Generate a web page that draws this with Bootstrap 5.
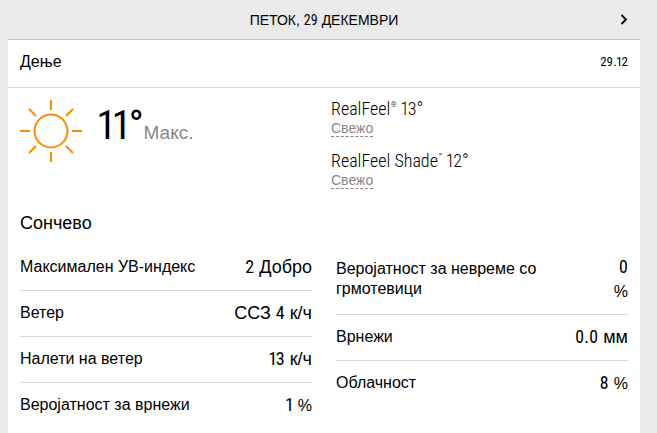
<!DOCTYPE html>
<html lang="mk">
<head>
<meta charset="utf-8">
<meta name="viewport" content="width=device-width, initial-scale=1">
<title>Петок, 29 декември</title>
<link href="https://cdn.jsdelivr.net/npm/bootstrap@5.3.0/dist/css/bootstrap.min.css" rel="stylesheet">
<style>
  body { background: #eaeaea; color: #000; font-family: "Liberation Sans", Arial, sans-serif; font-size: 16px; line-height: 20px; }
  .page { padding: 0 17px 0 8px; }
  .slim { font-family: "Roboto Condensed", "Liberation Sans", Arial, sans-serif; font-variant-numeric: proportional-nums; }
  .day-bar { height: 40px; padding: 0 12px 0 20px; border-bottom: 1px solid #c0c0c0; }
  .day-title { font-size: 14px; line-height: 20px; }
  .next-day { width: 8px; height: 20px; line-height: 0; color: #000; }
  .period { background: #fff; }
  .period-head { height: 48px; padding: 0 12px 4px; border-bottom: 1px solid #d8d8d8; }
  .period-date { font-size: 13px; }
  .period-body { padding: 12px 12px 0; }
  .summary { height: 112px; }
  .sun { width: 62px; height: 62px; margin-right: 16px; }
  .degrees { font-size: 40px; line-height: 52px; }
  .muted { color: #878787; }
  .max-label { font-size: 19px; }
  .feels { padding-left: 7px; }
  .feel { font-size: 18px; line-height: 18px; }
  .feel sup { font-size: 8px; top: -8px; }
  .feel-note { font-size: 14px; line-height: 16px; border-bottom: 1px dashed #878787; }
  .feel-item { height: 52px; }
  .phrase { font-size: 18px; line-height: 22px; }
  .facts { padding-top: 11px; --bs-gutter-x: 24px; }
  .fact { padding: 10px 0 11px; border-bottom: 1px solid #d8d8d8; }
  .fact:last-child { border-bottom: 0; }
  .fact-value { font-size: 18px; line-height: 24px; }
  .percent { font-size: 16px; line-height: 20px; }
</style>
</head>
<body>
<div class="page d-flex flex-column min-vh-100">
  <header class="day-bar d-flex align-items-center">
    <h1 class="day-title fw-normal text-center flex-grow-1 mb-0">ПЕТОК, <span class="slim">29</span> ДЕКЕМВРИ</h1>
    <button type="button" class="next-day btn p-0 border-0" aria-label="Следен ден">
      <svg width="8" height="12" viewBox="0 0 8 12" fill="none" stroke="currentColor" stroke-width="1.800" aria-hidden="true"><path d="M1.500 1 6 5.500 1.500 10"/></svg>
    </button>
  </header>
  <main class="period flex-grow-1">
    <div class="period-head d-flex align-items-center justify-content-between">
      <h2 class="fs-6 fw-normal mb-0">Дење</h2>
      <span class="period-date slim">29.12</span>
    </div>
    <div class="period-body">
      <div class="summary row gx-0">
        <div class="col-6 d-flex align-items-start">
          <svg class="sun" viewBox="0 0 62 62" fill="none" stroke="#ff8a00" stroke-width="2" aria-hidden="true">
            <circle cx="31" cy="31" r="16.500"/>
            <path d="M31 0v10M31 52v10M0 31h10M52 31h10M9 9l7 7M46 46l7 7M9 53l7-7M46 16l7-7"/>
          </svg>
          <div class="d-flex align-items-baseline">
            <span class="degrees slim">11°</span><span class="max-label muted">Макс.</span>
          </div>
        </div>
        <div class="feels col-6">
          <div class="feel-item">
            <div class="feel slim fw-light">RealFeel<sup>®</sup> 13°</div>
            <span class="feel-note muted d-inline-block">Свежо</span>
          </div>
          <div class="feel-item">
            <div class="feel slim fw-light">RealFeel Shade<sup>™</sup> 12°</div>
            <span class="feel-note muted d-inline-block">Свежо</span>
          </div>
        </div>
      </div>
      <p class="phrase mb-0">Сончево</p>
      <div class="facts row">
        <div class="col-6">
          <ul class="list-unstyled mb-0">
            <li class="fact d-flex justify-content-between align-items-center"><span>Максимален УВ-индекс</span><span class="fact-value"><span class="slim">2</span> Добро</span></li>
            <li class="fact d-flex justify-content-between align-items-center"><span>Ветер</span><span class="fact-value">ССЗ <span class="slim">4</span> к/ч</span></li>
            <li class="fact d-flex justify-content-between align-items-center"><span>Налети на ветер</span><span class="fact-value"><span class="slim">13</span> к/ч</span></li>
            <li class="fact d-flex justify-content-between align-items-center"><span>Веројатност за врнежи</span><span class="fact-value"><span class="slim">1</span> <span class="percent">%</span></span></li>
          </ul>
        </div>
        <div class="col-6">
          <ul class="list-unstyled mb-0">
            <li class="fact d-flex justify-content-between align-items-center"><span class="w-75">Веројатност за невреме со грмотевици</span><span class="fact-value text-end"><span class="slim">0</span><br><span class="percent">%</span></span></li>
            <li class="fact d-flex justify-content-between align-items-center"><span>Врнежи</span><span class="fact-value"><span class="slim">0.0</span> мм</span></li>
            <li class="fact d-flex justify-content-between align-items-center"><span>Облачност</span><span class="fact-value"><span class="slim">8</span> <span class="percent">%</span></span></li>
          </ul>
        </div>
      </div>
    </div>
  </main>
</div>
<script src="https://cdn.jsdelivr.net/npm/bootstrap@5.3.0/dist/js/bootstrap.bundle.min.js"></script>
</body>
</html>
